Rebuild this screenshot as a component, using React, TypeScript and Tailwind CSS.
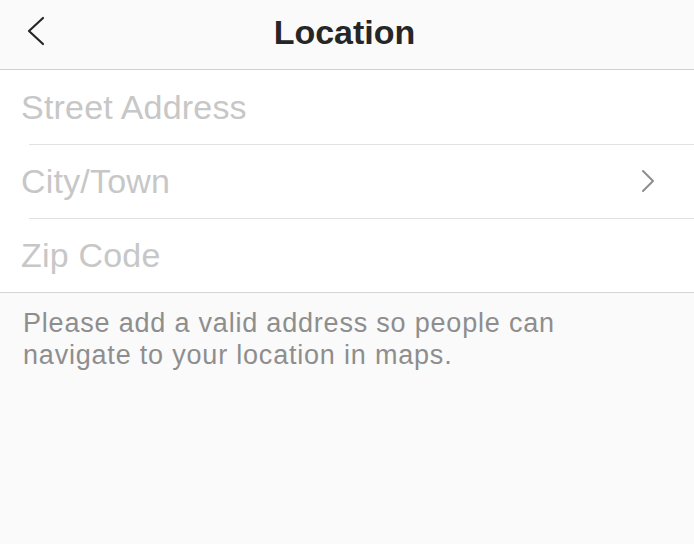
import React from "react"

const fields = [
  { id: "street", label: "Street Address", chevron: false },
  { id: "city", label: "City/Town", chevron: true },
  { id: "zip", label: "Zip Code", chevron: false },
]

export default function App() {
  return (
    <div
      className="w-[694px] h-[544px] bg-[#fafafa] overflow-hidden"
      style={{ fontFamily: '"Liberation Sans", Arial, sans-serif' }}
    >
      {/* Header */}
      <div className="relative h-[70px] flex items-center justify-center border-b border-[#cfcfcf]">
        <svg
          className="absolute left-[26px] top-[16px]"
          width="19"
          height="30"
          viewBox="0 0 19 30"
          fill="none"
        >
          <path d="M17 2 L3 15 L17 28" stroke="#262626" strokeWidth="2.2" strokeLinecap="round" strokeLinejoin="round" />
        </svg>
        <h1 className="text-[34px] font-bold text-[#262626] mt-[-5px] mr-[5px]">Location</h1>
      </div>

      {/* Fields */}
      <div className="bg-white border-b border-[#d6d6d6] flex flex-col">
        {fields.map((f, i) => (
          <div key={f.id} className="relative h-[74px] flex items-center pl-[21px]">
            {i > 0 && <div className="absolute top-0 left-[29px] right-0 h-px bg-[#e2e2e2]" />}
            <span className="text-[34px] tracking-[0.2px] text-[#c7c7c7] mt-[1px]">{f.label}</span>
            {f.chevron && (
              <svg className="ml-auto mr-[39px]" width="14" height="24" viewBox="0 0 14 24" fill="none">
                <path d="M2 2 L12 12 L2 22" stroke="#8e8e8e" strokeWidth="2" strokeLinecap="round" strokeLinejoin="round" />
              </svg>
            )}
          </div>
        ))}
      </div>

      {/* Help text */}
      <p className="px-[23px] pt-[14px] text-[27px] tracking-[0.8px] leading-[32px] text-[#8e8e8e]">
        Please add a valid address so people can
        <br />
        navigate to your location in maps.
      </p>
    </div>
  )
}
